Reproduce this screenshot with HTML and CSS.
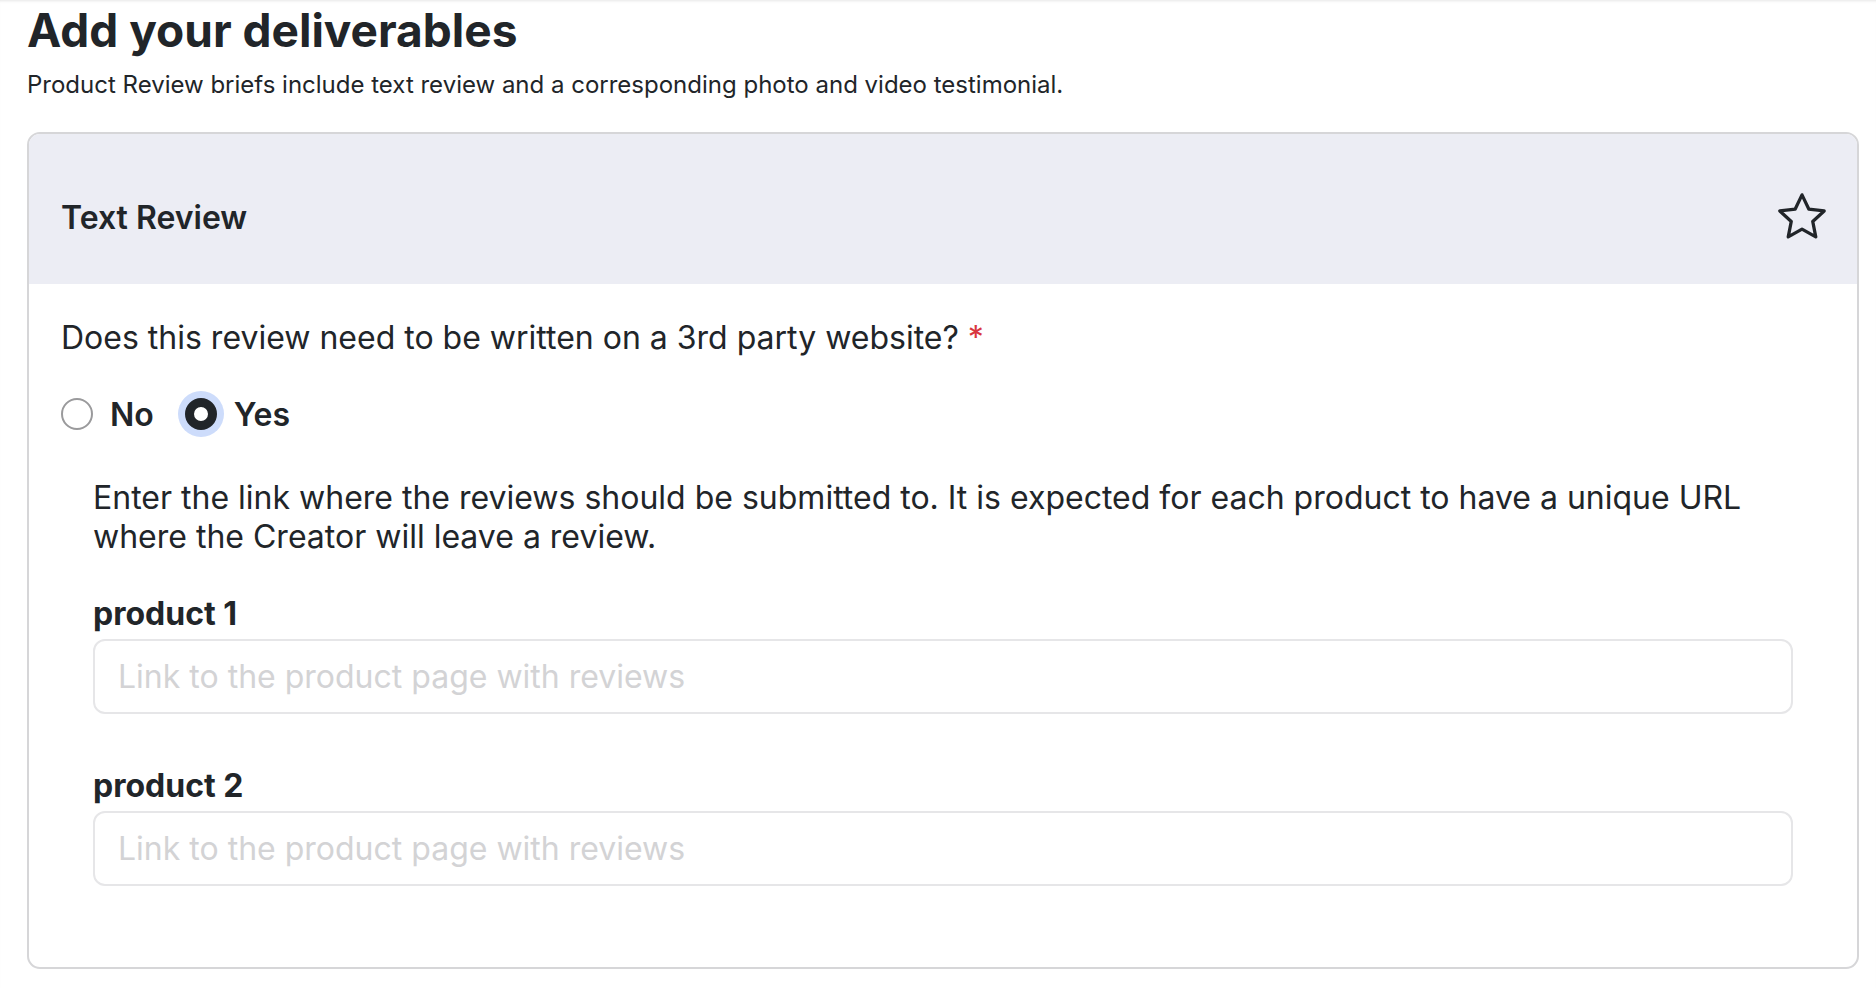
FILE: index.html
```html
<!DOCTYPE html>
<html lang="en">
<head>
  <meta charset="UTF-8">
  <meta name="viewport" content="width=device-width, initial-scale=1.0">
  <title>Add your deliverables</title>
  <link rel="stylesheet" href="styles.css">
</head>
<body>
  <div class="page">
    <h1>Add your deliverables</h1>
    <p class="subtitle">Product Review briefs include text review and a corresponding photo and video testimonial.</p>

    <section class="card">
      <div class="card-header">
        <h2>Text Review</h2>
        <svg class="star" viewBox="0 0 24 24" width="56" height="56" fill="none" stroke="currentColor" stroke-width="1.4" stroke-linejoin="round" stroke-linecap="round">
          <polygon points="12 2.5 14.9 8.6 21.5 9.4 16.6 13.9 17.9 20.5 12 17.2 6.1 20.5 7.4 13.9 2.5 9.4 9.1 8.6"></polygon>
        </svg>
      </div>

      <div class="card-body">
        <p class="question">Does this review need to be written on a 3rd party website? <span class="required">*</span></p>

        <div class="radio-group">
          <label class="radio-option">
            <input type="radio" name="third-party" value="no">
            <span>No</span>
          </label>
          <label class="radio-option">
            <input type="radio" name="third-party" value="yes" checked>
            <span>Yes</span>
          </label>
        </div>

        <div class="links">
          <p class="hint">Enter the link where the reviews should be submitted to. It is expected for each product to have a unique URL where the Creator will leave a review.</p>

          <div class="field">
            <label for="product-1">product 1</label>
            <input type="text" id="product-1" placeholder="Link to the product page with reviews">
          </div>

          <div class="field">
            <label for="product-2">product 2</label>
            <input type="text" id="product-2" placeholder="Link to the product page with reviews">
          </div>
        </div>
      </div>
    </section>
  </div>
</body>
</html>
```

FILE: styles.css
```css
body {
  margin: 0;
  font-family: Inter, "Noto Sans", sans-serif;
  color: #212529;
  background: #fff;
}

.page {
  padding: 3px 17px 0 27px;
  box-shadow: inset 0 3px 3px -2px rgba(0, 0, 0, 0.1);
  min-height: 988px;
  box-sizing: border-box;
}

h1 {
  font-size: 46px;
  font-weight: 700;
  line-height: 1.21;
  margin: 0;
}

.subtitle {
  font-size: 24px;
  line-height: 33px;
  margin: 9px 0 31px;
}

.card {
  border: 2px solid #d6d6d8;
  border-radius: 13px;
  overflow: hidden;
}

.card-header {
  display: flex;
  align-items: center;
  justify-content: space-between;
  height: 150px;
  box-sizing: border-box;
  padding: 17px 27px 0 32px;
  background: #ecedf4;
}

.card-header h2 {
  font-size: 32px;
  font-weight: 600;
  margin: 0;
}

.star {
  color: #212529;
}

.card-body {
  padding: 34px 32px 29px;
}

.question {
  font-size: 32px;
  line-height: 40px;
  margin: 0;
}

.required {
  color: #d9363e;
}

.radio-group {
  display: flex;
  align-items: center;
  gap: 31px;
  margin-top: 33px;
  height: 47px;
}

.radio-option {
  display: flex;
  align-items: center;
  gap: 17px;
  font-size: 32px;
  font-weight: 600;
  cursor: pointer;
}

.radio-option input {
  appearance: none;
  width: 32px;
  height: 32px;
  margin: 0;
  border: 2px solid #9a9a9c;
  border-radius: 50%;
  background: #fff;
}

.radio-option input:checked {
  border: 9px solid #212529;
  box-shadow: 0 0 0 7px #cddcfb;
}

.links {
  padding: 0 32px;
  margin-top: 40px;
}

.hint {
  font-size: 32px;
  line-height: 39.5px;
  margin: 0 0 37px;
}

.field {
  margin-bottom: 52px;
}

.field label {
  display: block;
  font-size: 32px;
  font-weight: 700;
  line-height: 40px;
  margin-bottom: 5px;
}

.field input {
  display: block;
  width: 100%;
  height: 75px;
  box-sizing: border-box;
  padding: 0 23px;
  border: 2px solid #e6e6e8;
  border-radius: 12px;
  font-family: inherit;
  font-size: 32px;
  color: #212529;
}

.field input::placeholder {
  color: #d3d3d5;
}
```
